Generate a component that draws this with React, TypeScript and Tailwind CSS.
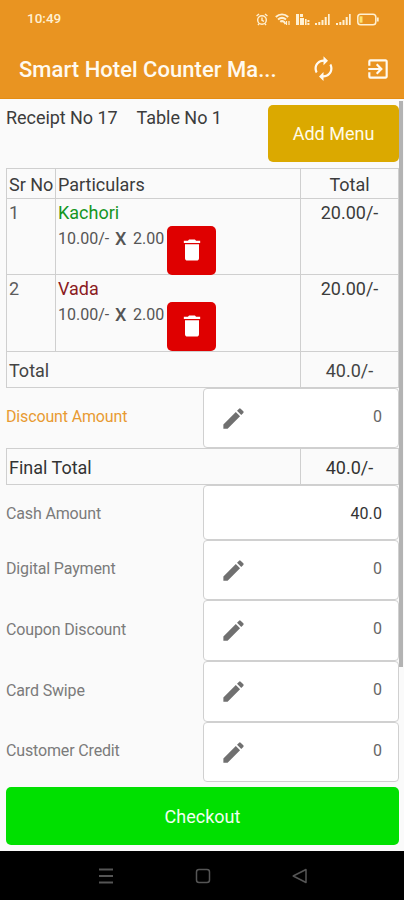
import { MdAutorenew, MdDelete, MdEdit, MdExitToApp } from 'react-icons/md';

const items = [
  { no: 1, name: 'Kachori', color: 'text-[#16961f]', rate: '10.00/-', qty: '2.00', total: '20.00/-', height: 'h-[76px]' },
  { no: 2, name: 'Vada', color: 'text-[#8b1a22]', rate: '10.00/-', qty: '2.00', total: '20.00/-', height: 'h-[77px]' },
];

const payments = [
  { label: 'Digital Payment', value: '0', height: 'h-[60px]' },
  { label: 'Coupon Discount', value: '0', height: 'h-[61px]' },
  { label: 'Card Swipe', value: '0', height: 'h-[61px]' },
  { label: 'Customer Credit', value: '0', height: 'h-[60px]' },
];

function Signal() {
  return (
    <svg width="16" height="13" viewBox="0 0 16 13" fill="currentColor">
      <path d="M0 10h2v2H0zM3.3 9h2v3h-2zM6.5 7h2v5h-2zM9.7 4h2v8h-2zM13 1h1.7v11H13z" />
    </svg>
  );
}

function StatusBar() {
  return (
    <div className="flex h-[38px] items-center justify-between pl-[27px] pr-[25px] text-[#fff0d2]">
      <span className="text-[13.5px] font-medium leading-none">10:49</span>
      <div className="flex items-center">
        <svg width="12" height="13" viewBox="0 0 12 13" fill="none" stroke="currentColor" strokeWidth="1.4">
          <circle cx="6" cy="7" r="4.3" />
          <path d="M.6 3 3 1M11.4 3 9 1M6 4.5V7.3l2 1M3 10.7l-1 1.3M9 10.7l1 1.3" />
        </svg>
        <svg className="ml-[7px]" width="16" height="13" viewBox="0 0 16 13" fill="none" stroke="currentColor" strokeWidth="2">
          <path d="M.8 4C4.5.8 9.5.8 13.2 4M3 6.5c2.5-2 5.5-2 8 0M5.2 8.8c1.2-.9 2.5-.9 3.8 0L10.5 11" />
          <path d="M11.5 12V8M14 8v4" strokeWidth="1.2" />
        </svg>
        <svg className="ml-[5px]" width="14" height="13" viewBox="0 0 14 13" fill="currentColor">
          <path d="M0 1h3v11H0zM4 1h3v3H4zM4 5h4v7H4zM9 6h1.6v6H9zM11.4 7h2v2h-2zM11.4 10h2v2h-2z" />
        </svg>
        <span className="ml-[5px]"><Signal /></span>
        <span className="ml-[5px]"><Signal /></span>
        <svg className="ml-[5px]" width="22" height="13" viewBox="0 0 22 13" fill="none" stroke="currentColor" strokeWidth="1.5">
          <rect x=".8" y="1.2" width="18" height="10.6" rx="2.8" />
          <path d="M20.8 4.5v4" strokeWidth="1.8" />
          <path d="M4 3.3v6.4" stroke="#ffe36b" strokeWidth="3" />
        </svg>
      </div>
    </div>
  );
}

function Field({ label, value, height, color = 'text-[#7b7b7b]', valueColor = 'text-[#666]', edit = true }: {
  label: string;
  value: string;
  height: string;
  color?: string;
  valueColor?: string;
  edit?: boolean;
}) {
  return (
    <div className={`flex shrink-0 pl-[6px] ${height}`}>
      <div className={`flex w-[197px] items-center text-[16px] tracking-[-0.15px] ${edit ? 'pb-[2px]' : 'pt-[2px]'} ${color}`}>{label}</div>
      <div className={`flex w-[196px] items-center rounded-[4px] border border-[#d0d0d0] bg-white pr-[16px] text-[16px] ${edit ? 'justify-between pl-[16px]' : 'justify-end'} ${valueColor}`}>
        {edit && <MdEdit className="size-[27px] text-[#707070]" />}
        <span className={`tracking-[0.1px] ${edit ? 'pb-[3px]' : 'pt-[2px]'}`}>{value}</span>
      </div>
    </div>
  );
}

function TotalRow({ label, value, color }: { label: string; value: string; color: string }) {
  return (
    <div className={`flex flex-1 items-stretch ${color}`}>
      <div className="flex w-[294px] items-center border-r border-[#cfcfcf] pl-[2px] pt-[1px]">{label}</div>
      <div className="flex flex-1 items-center justify-center pt-[1px]">{value}</div>
    </div>
  );
}

export default function App() {
  return (
    <div className="flex h-[900px] w-[404px] flex-col overflow-hidden bg-[#fafafa] font-['Roboto',sans-serif]">
      <header className="h-[99px] shrink-0 border-b border-[#e58d13] bg-[#e99421]">
        <StatusBar />
        <div className="flex h-[61px] items-center pl-[19px] text-[#fffaf0]">
          <h1 className="w-[288px] whitespace-nowrap pt-[1px] text-[22px] font-medium tracking-[0.03px]">Smart Hotel Counter Ma...</h1>
          <MdAutorenew className="ml-[3px] size-[27px]" />
          <MdExitToApp className="ml-[28px] size-[26px]" />
        </div>
      </header>

      <main className="relative flex h-[683px] shrink-0 flex-col overflow-hidden text-[18px] text-[#3c3c3c]">
        <div className="flex h-[69px] shrink-0 justify-between pl-[6px] pr-[5px] pt-[6px]">
          <div className="flex gap-[19px] leading-[26px] tracking-[-0.05px]">
            <span>Receipt No 17</span>
            <span>Table No 1</span>
          </div>
          <button className="h-[57px] w-[131px] rounded-[5px] bg-[#dba900] text-[18px] text-[#fffbe8]">Add Menu</button>
        </div>

        <section className="ml-[6px] flex h-[220px] w-[393px] shrink-0 flex-col border border-[#cfcfcf]">
          <div className="flex h-[30px] shrink-0 items-stretch border-b border-[#cfcfcf]">
            <div className="flex w-[49px] items-center whitespace-nowrap border-r border-[#cfcfcf] pl-[2px] pt-[2px]">Sr No</div>
            <div className="flex w-[245px] items-center border-r border-[#cfcfcf] pl-[2px] pt-[2px]">Particulars</div>
            <div className="flex flex-1 items-center justify-center pt-[2px]">Total</div>
          </div>
          {items.map((item) => (
            <div key={item.no} className={`flex shrink-0 items-stretch border-b border-[#cfcfcf] leading-[26px] ${item.height}`}>
              <div className="w-[49px] border-r border-[#cfcfcf] pl-[2px] pt-[1px] text-[#5c5c5c]">{item.no}</div>
              <div className="w-[245px] border-r border-[#cfcfcf] pl-[2px] pt-[1px]">
                <div className={item.color}>{item.name}</div>
                <div className="flex text-[16px] text-[#555]">
                  <span className="w-[57px]">{item.rate}</span>
                  <span className="w-[18px] text-[18px] font-medium leading-[25px]">X</span>
                  <span className="w-[34px]">{item.qty}</span>
                  <button className="flex size-[49px] shrink-0 items-center justify-center rounded-[5px] bg-[#df0000] pb-[2px] pl-[1px] text-white">
                    <MdDelete className="size-[28px]" />
                  </button>
                </div>
              </div>
              <div className="flex-1 pt-[1px] text-center">{item.total}</div>
            </div>
          ))}
          <TotalRow label="Total" value="40.0/-" color="text-[#444]" />
        </section>

        <Field label="Discount Amount" value="0" height="h-[60px]" color="text-[#e89a32]" />
        <section className="ml-[6px] flex h-[37px] w-[393px] shrink-0 border border-[#cfcfcf]">
          <TotalRow label="Final Total" value="40.0/-" color="text-[#333]" />
        </section>
        <Field label="Cash Amount" value="40.0" height="h-[55px]" valueColor="text-[#333]" edit={false} />
        {payments.map((p) => (
          <Field key={p.label} {...p} />
        ))}
        <div className="absolute right-[1px] top-[2px] h-[566px] w-[4px] bg-[#b3b3b3]" />
      </main>

      <div className="h-[69px] shrink-0 px-[6px] pt-[5px]">
        <button className="h-[58px] w-[393px] rounded-[5px] bg-[#00e000] pt-[1px] text-[18px] text-[#f0fff0]">Checkout</button>
      </div>

      <nav className="flex flex-1 items-center bg-black pl-[98px] text-[#555]">
        <svg width="16" height="16" viewBox="0 0 16 16" stroke="currentColor" strokeWidth="2">
          <path d="M1 1.5h14M1 8h14M1 14.5h14" />
        </svg>
        <svg className="ml-[81px]" width="16" height="16" viewBox="0 0 16 16" fill="none" stroke="currentColor" strokeWidth="1.5">
          <rect x="1.5" y="1.5" width="13" height="13" rx="2.5" />
        </svg>
        <svg className="ml-[81px]" width="16" height="16" viewBox="0 0 16 16" fill="none" stroke="currentColor" strokeWidth="1.5" strokeLinejoin="round">
          <path d="M1.2 8 14 1.5v13z" />
        </svg>
      </nav>
    </div>
  );
}
